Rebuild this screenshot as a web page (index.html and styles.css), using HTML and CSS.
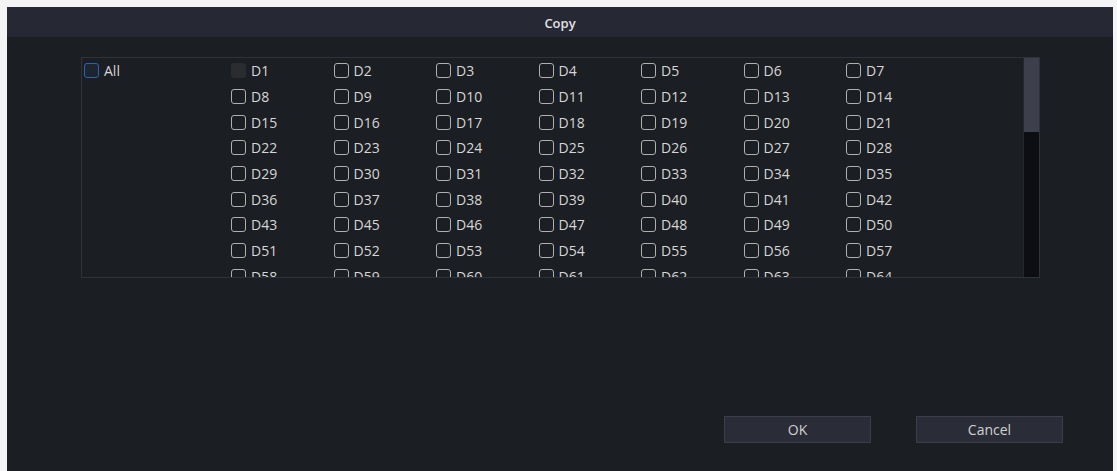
FILE: index.html
```html
<!DOCTYPE html>
<html lang="en">
<head>
    <meta charset="UTF-8">
    <title>Copy</title>
    <link rel="stylesheet" href="styles.css">
</head>
<body>
    <div class="dialog">
        <div class="dialog-title">Copy</div>
        <div class="dialog-body">
            <div class="list-box">
                <div class="all-col">
                    <label class="chk"><span class="box box-blue"></span>All</label>
                </div>
                <div class="channels">
                    <label class="chk"><span class="box box-disabled"></span>D1</label>
                    <label class="chk"><span class="box"></span>D2</label>
                    <label class="chk"><span class="box"></span>D3</label>
                    <label class="chk"><span class="box"></span>D4</label>
                    <label class="chk"><span class="box"></span>D5</label>
                    <label class="chk"><span class="box"></span>D6</label>
                    <label class="chk"><span class="box"></span>D7</label>
                    <label class="chk"><span class="box"></span>D8</label>
                    <label class="chk"><span class="box"></span>D9</label>
                    <label class="chk"><span class="box"></span>D10</label>
                    <label class="chk"><span class="box"></span>D11</label>
                    <label class="chk"><span class="box"></span>D12</label>
                    <label class="chk"><span class="box"></span>D13</label>
                    <label class="chk"><span class="box"></span>D14</label>
                    <label class="chk"><span class="box"></span>D15</label>
                    <label class="chk"><span class="box"></span>D16</label>
                    <label class="chk"><span class="box"></span>D17</label>
                    <label class="chk"><span class="box"></span>D18</label>
                    <label class="chk"><span class="box"></span>D19</label>
                    <label class="chk"><span class="box"></span>D20</label>
                    <label class="chk"><span class="box"></span>D21</label>
                    <label class="chk"><span class="box"></span>D22</label>
                    <label class="chk"><span class="box"></span>D23</label>
                    <label class="chk"><span class="box"></span>D24</label>
                    <label class="chk"><span class="box"></span>D25</label>
                    <label class="chk"><span class="box"></span>D26</label>
                    <label class="chk"><span class="box"></span>D27</label>
                    <label class="chk"><span class="box"></span>D28</label>
                    <label class="chk"><span class="box"></span>D29</label>
                    <label class="chk"><span class="box"></span>D30</label>
                    <label class="chk"><span class="box"></span>D31</label>
                    <label class="chk"><span class="box"></span>D32</label>
                    <label class="chk"><span class="box"></span>D33</label>
                    <label class="chk"><span class="box"></span>D34</label>
                    <label class="chk"><span class="box"></span>D35</label>
                    <label class="chk"><span class="box"></span>D36</label>
                    <label class="chk"><span class="box"></span>D37</label>
                    <label class="chk"><span class="box"></span>D38</label>
                    <label class="chk"><span class="box"></span>D39</label>
                    <label class="chk"><span class="box"></span>D40</label>
                    <label class="chk"><span class="box"></span>D41</label>
                    <label class="chk"><span class="box"></span>D42</label>
                    <label class="chk"><span class="box"></span>D43</label>
                    <label class="chk"><span class="box"></span>D45</label>
                    <label class="chk"><span class="box"></span>D46</label>
                    <label class="chk"><span class="box"></span>D47</label>
                    <label class="chk"><span class="box"></span>D48</label>
                    <label class="chk"><span class="box"></span>D49</label>
                    <label class="chk"><span class="box"></span>D50</label>
                    <label class="chk"><span class="box"></span>D51</label>
                    <label class="chk"><span class="box"></span>D52</label>
                    <label class="chk"><span class="box"></span>D53</label>
                    <label class="chk"><span class="box"></span>D54</label>
                    <label class="chk"><span class="box"></span>D55</label>
                    <label class="chk"><span class="box"></span>D56</label>
                    <label class="chk"><span class="box"></span>D57</label>
                    <label class="chk"><span class="box"></span>D58</label>
                    <label class="chk"><span class="box"></span>D59</label>
                    <label class="chk"><span class="box"></span>D60</label>
                    <label class="chk"><span class="box"></span>D61</label>
                    <label class="chk"><span class="box"></span>D62</label>
                    <label class="chk"><span class="box"></span>D63</label>
                    <label class="chk"><span class="box"></span>D64</label>
                </div>
                <div class="scrollbar"><div class="thumb"></div></div>
            </div>
            <div class="actions">
                <button type="button" class="btn">OK</button>
                <button type="button" class="btn">Cancel</button>
            </div>
        </div>
    </div>
</body>
</html>
```

FILE: styles.css
```css
body { margin: 0; background: #f4f4f4; font-family: "Open Sans", "Noto Sans", sans-serif; }
.dialog { margin: 7px 4px 0 7px; height: 464px; background: #1b1e22; display: flex; flex-direction: column; }
.dialog-title { height: 30px; line-height: 32px; background: #262833; color: #e2e2e2; text-align: center; font-size: 13px; font-weight: 600; }
.dialog-body { flex: 1; padding: 20px 50px 0 74px; display: flex; flex-direction: column; }
.list-box { width: 959px; height: 221px; box-sizing: border-box; border: 1px solid #2f3237; display: flex; overflow: hidden; }
.all-col { width: 147px; padding-left: 2px; }
.channels { flex: 1; display: grid; grid-template-columns: repeat(7, 102.5px); grid-auto-rows: 25.7px; align-content: start; }
.chk { display: flex; align-items: center; height: 25.7px; color: #d6d6d6; font-size: 14px; white-space: nowrap; }
.box { width: 15px; height: 15px; box-sizing: border-box; border: 1.5px solid #b0b0b0; border-radius: 3px; margin-right: 5px; flex: none; }
.box-blue { border-color: #2e62ae; background: #1c2530; }
.box-disabled { border-color: #2a2c30; background: #2a2c30; }
.scrollbar { width: 15px; background: #0c0e11; border-left: 1px solid #24272c; }
.thumb { height: 74px; background: #3d3f4d; }
.actions { display: flex; justify-content: flex-end; gap: 45px; margin-top: 138px; }
.btn { width: 147px; height: 27px; background: #2a2c37; border: 1px solid #3b3e4a; color: #d2d2d2; font-family: inherit; font-size: 14px; padding: 0; }
```
